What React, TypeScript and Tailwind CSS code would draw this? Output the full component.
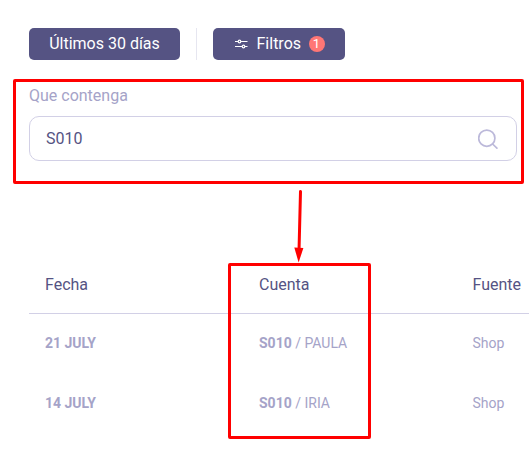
import clsx from "clsx";

const rows = [
  { date: "21 JULY", code: "S010", name: "PAULA", source: "Shop" },
  { date: "14 JULY", code: "S010", name: "IRIA", source: "Shop" },
];

function SlidersIcon({ className }: { className?: string }) {
  return (
    <svg
      viewBox="0 0 13 10"
      fill="none"
      stroke="currentColor"
      strokeWidth="1.2"
      className={className}
    >
      <path d="M0 2.5h3.2M5.8 2.5h6.7M0 7.5h7.1M9.9 7.5h2.6" />
      <circle cx="4.5" cy="2.5" r="1.3" />
      <circle cx="8.5" cy="7.5" r="1.3" />
    </svg>
  );
}

function SearchIcon({ className }: { className?: string }) {
  return (
    <svg
      viewBox="0 0 20 20"
      fill="none"
      stroke="currentColor"
      strokeWidth="1.7"
      strokeLinecap="round"
      className={className}
    >
      <circle cx="8.8" cy="9.2" r="8.1" />
      <path d="M14.6 15L18.9 19.2" />
    </svg>
  );
}

function Toolbar() {
  return (
    <div className="flex h-8 text-white">
      <button className="w-[151px] rounded-[5px] bg-[#555383]">Últimos 30 días</button>
      <div className="ml-4 mr-4 w-px bg-[#e6e6f0]" />
      <button className="flex w-[132px] items-center rounded-[5px] bg-[#555383] pl-[22px]">
        <SlidersIcon className="h-2.5 w-[13px]" />
        <span className="ml-[8.5px]">Filtros</span>
        <span className="ml-[7.5px] size-4 rounded-full bg-[#ff7675] text-center text-[13px] leading-4">
          1
        </span>
      </button>
    </div>
  );
}

function Highlight({ className }: { className?: string }) {
  return (
    <div
      className={clsx("pointer-events-none absolute rounded-[2px] border-[3px] border-[#ff0000]", className)}
    />
  );
}

export default function App() {
  return (
    <div className="relative h-[458px] w-[529px] overflow-hidden bg-white pl-[29px] pt-7 font-['Roboto',sans-serif] text-base text-[#555383]">
      <Toolbar />

      <label className="mt-6 block leading-6 text-[#a5a3c8]">Que contenga</label>
      <div className="mt-2 flex h-[45px] w-[488px] items-center justify-between rounded-[10px] border border-[#d2d0e6] pl-4 pr-[18px]">
        <span>S010</span>
        <SearchIcon className="size-5 text-[#bcb9da]" />
      </div>

      <table className="mt-[93px] w-[560px] table-fixed border-separate border-spacing-0 text-left">
        <thead>
          <tr className="h-[60px]">
            <th className="w-[214px] border-b border-[#d2d0e6] pl-4 pt-0.5 font-normal">Fecha</th>
            <th className="w-[213.5px] border-b border-[#d2d0e6] pl-4 pt-0.5 font-normal">Cuenta</th>
            <th className="border-b border-[#d2d0e6] pl-4 pt-0.5 font-normal">Fuente</th>
          </tr>
        </thead>
        <tbody className="text-sm text-[#a5a3c8]">
          {rows.map((row) => (
            <tr key={row.date} className="h-[60px]">
              <td className="pb-[3px] pl-4 font-bold">{row.date}</td>
              <td className="pb-[3px] pl-4">
                <b>{row.code}</b> / {row.name}
              </td>
              <td className="pb-[3px] pl-4">{row.source}</td>
            </tr>
          ))}
        </tbody>
      </table>

      {/* Annotations drawn over the page */}
      <Highlight className="left-[13px] top-[79px] h-[105px] w-[511px]" />
      <Highlight className="left-[228px] top-[263px] h-[176px] w-[143px]" />
      <svg
        viewBox="0 0 12 74"
        className="pointer-events-none absolute left-[293px] top-[189px] h-[74px] w-3 text-[#ff0000]"
      >
        <path d="M7.5 2.5L6 62" stroke="currentColor" strokeWidth="3" strokeLinecap="round" />
        <path d="M1.3 58.5L10.4 59L5.6 73.5Z" fill="currentColor" />
      </svg>
    </div>
  );
}
